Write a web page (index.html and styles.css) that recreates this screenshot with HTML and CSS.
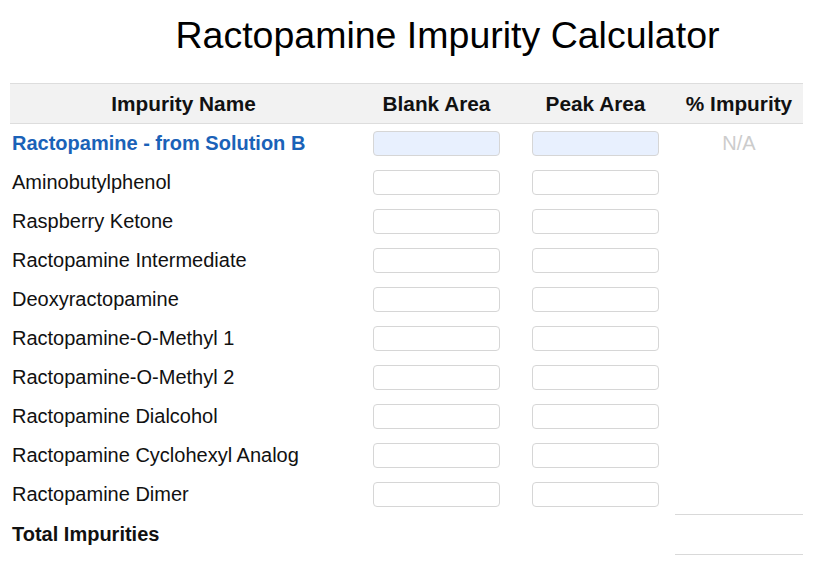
FILE: index.html
```html
<!DOCTYPE html>
<html lang="en">
<head>
<meta charset="utf-8">
<title>Ractopamine Impurity Calculator</title>
<link rel="stylesheet" href="styles.css">
</head>
<body>
<div class="page">
  <h1 class="title">Ractopamine Impurity Calculator</h1>
  <table class="calc">
    <colgroup>
      <col class="c-name">
      <col class="c-blank">
      <col class="c-peak">
      <col class="c-pct">
    </colgroup>
    <thead>
      <tr>
        <th>Impurity Name</th>
        <th>Blank Area</th>
        <th>Peak Area</th>
        <th>% Impurity</th>
      </tr>
    </thead>
    <tbody>
      <tr class="ref">
        <td class="name">Ractopamine - from Solution B</td>
        <td class="inp"><input type="text"></td>
        <td class="inp"><input type="text"></td>
        <td class="pct na">N/A</td>
      </tr>
      <tr><td class="name">Aminobutylphenol</td><td class="inp"><input type="text"></td><td class="inp"><input type="text"></td><td class="pct"></td></tr>
      <tr><td class="name">Raspberry Ketone</td><td class="inp"><input type="text"></td><td class="inp"><input type="text"></td><td class="pct"></td></tr>
      <tr><td class="name">Ractopamine Intermediate</td><td class="inp"><input type="text"></td><td class="inp"><input type="text"></td><td class="pct"></td></tr>
      <tr><td class="name">Deoxyractopamine</td><td class="inp"><input type="text"></td><td class="inp"><input type="text"></td><td class="pct"></td></tr>
      <tr><td class="name">Ractopamine-O-Methyl 1</td><td class="inp"><input type="text"></td><td class="inp"><input type="text"></td><td class="pct"></td></tr>
      <tr><td class="name">Ractopamine-O-Methyl 2</td><td class="inp"><input type="text"></td><td class="inp"><input type="text"></td><td class="pct"></td></tr>
      <tr><td class="name">Ractopamine Dialcohol</td><td class="inp"><input type="text"></td><td class="inp"><input type="text"></td><td class="pct"></td></tr>
      <tr><td class="name">Ractopamine Cyclohexyl Analog</td><td class="inp"><input type="text"></td><td class="inp"><input type="text"></td><td class="pct"></td></tr>
      <tr><td class="name">Ractopamine Dimer</td><td class="inp"><input type="text"></td><td class="inp"><input type="text"></td><td class="pct"></td></tr>
      <tr class="total">
        <td class="name">Total Impurities</td>
        <td></td>
        <td></td>
        <td class="pct total-val"></td>
      </tr>
    </tbody>
  </table>
</div>
</body>
</html>
```

FILE: styles.css
```css
html, body {
  margin: 0;
  padding: 0;
  background: #ffffff;
}

body {
  font-family: "Liberation Sans", Arial, sans-serif;
  color: #111111;
}

.page {
  padding: 0 11px 0 10px;
}

.title {
  margin: 0;
  padding: 13px 0 0 82px;
  height: 83px;
  box-sizing: border-box;
  text-align: center;
  font-size: 37.5px;
  font-weight: normal;
  line-height: 44px;
  color: #000000;
}

.calc {
  width: 793px;
  border-collapse: collapse;
  table-layout: fixed;
}

.c-name { width: 347px; }
.c-blank { width: 159px; }
.c-peak { width: 159px; }
.c-pct { width: 128px; }

.calc th {
  background: #f2f2f2;
  border-top: 1px solid #dddddd;
  border-bottom: 1px solid #dddddd;
  height: 39px;
  padding: 0;
  font-size: 20.8px;
  font-weight: bold;
  text-align: center;
  color: #111111;
}

.calc td {
  height: 39px;
  padding: 0;
  font-size: 20px;
  vertical-align: middle;
}

.calc td.name {
  padding-left: 2px;
}

.calc td.inp {
  padding-left: 16px;
}

.calc input {
  display: block;
  width: 127px;
  height: 25px;
  box-sizing: border-box;
  border: 1px solid #d6d6d6;
  border-radius: 4px;
  background: #ffffff;
  margin: 0;
  padding: 0 6px;
  font-family: inherit;
  font-size: 14px;
}

.ref .name {
  color: #1a62b8;
  font-weight: bold;
}

.ref input {
  background: #e8f0fe;
}

.pct {
  text-align: center;
}

.na {
  color: #cccccc;
  font-size: 20px;
}

.total td {
  height: 39px;
}

.total .name {
  font-weight: bold;
}

.total-val {
  border-top: 1px solid #d9d9d9;
  border-bottom: 1px solid #d9d9d9;
}
```
